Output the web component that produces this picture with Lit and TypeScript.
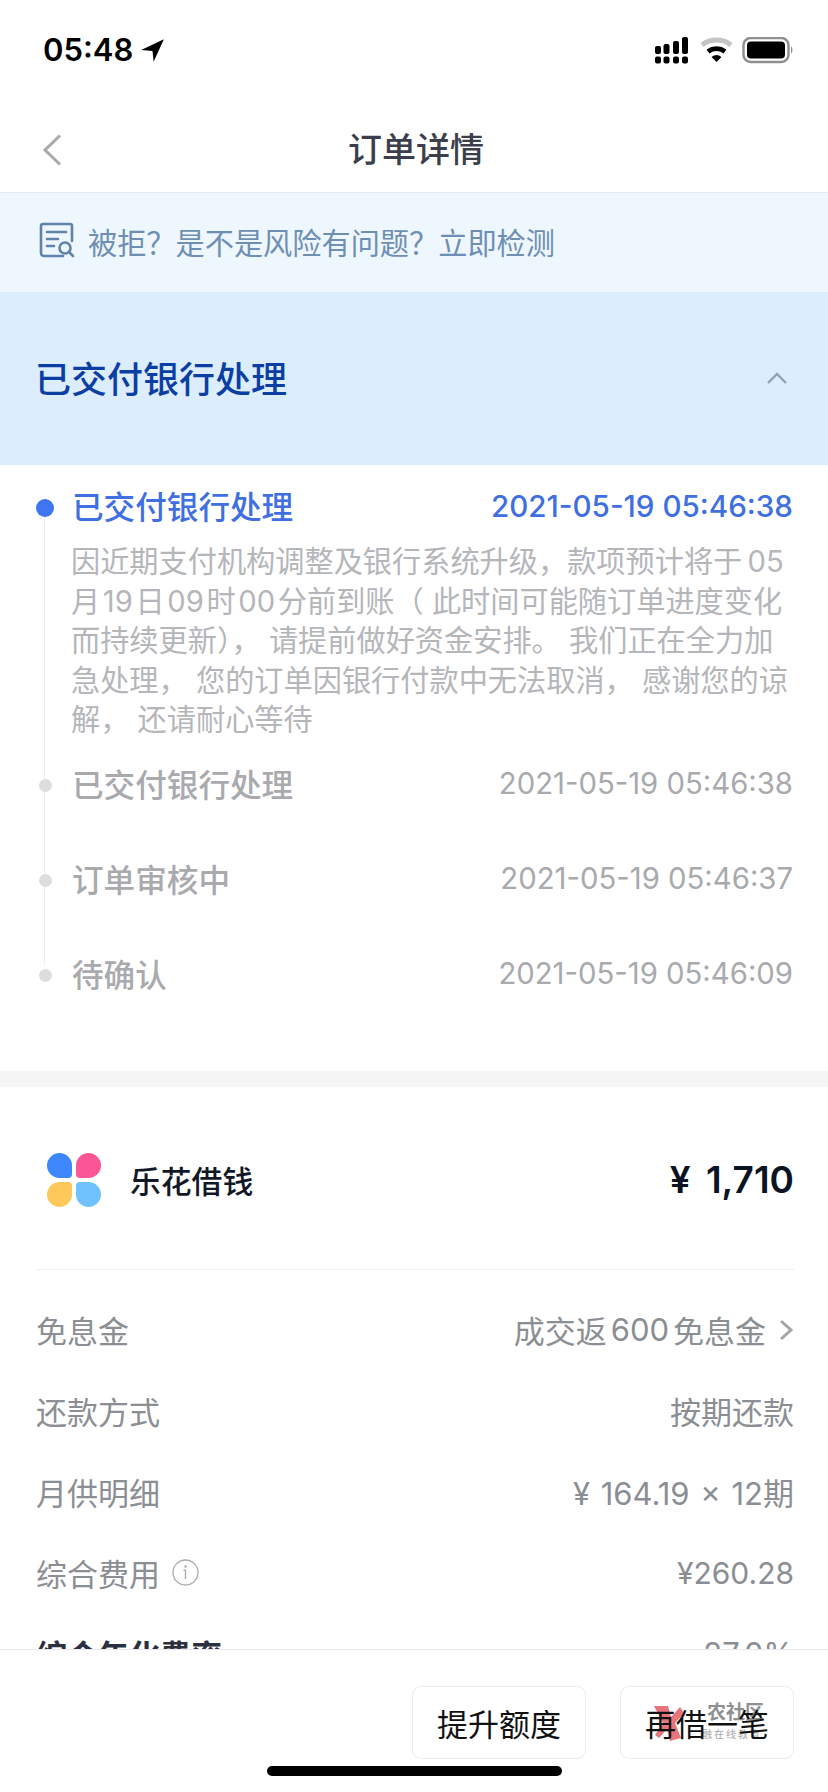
import { LitElement, html, css } from "lit";
import { customElement } from "lit/decorators.js";

const BODY = [
  "因近期支付机构调整及银行系统升级，款项预计将于\u200905",
  "月\u200a19\u200a日\u200a09\u200a时\u200a00\u200a分前到账（ 此时间可能随订单进度变化",
  "而持续更新）， 请提前做好资金安排。 我们正在全力加",
  "急处理， 您的订单因银行付款中无法取消， 感谢您的谅",
  "解， 还请耐心等待",
];
const HISTORY = [
  ["已交付银行处理", "2021-05-19 05:46:38"],
  ["订单审核中", "2021-05-19 05:46:37"],
  ["待确认", "2021-05-19 05:46:09"],
];

@customElement("app-root")
export class AppRoot extends LitElement {
  static styles = css`
    :host {
      display: block;
      position: relative;
      width: 828px;
      height: 1792px;
      overflow: hidden;
      background: #fff;
      font-family: Inter, "Noto Sans CJK SC", sans-serif;
    }
    .status {
      height: 100px;
      display: flex;
      justify-content: space-between;
      padding: 37px 33px 0 43px;
      box-sizing: border-box;
    }
    .time {
      display: flex;
      align-items: flex-start;
      gap: 7px;
      font-size: 31px;
      line-height: 26px;
      font-weight: 600;
      color: #000;
    }
    .time svg { margin-top: 1px; }
    .nav {
      height: 93px;
      box-sizing: border-box;
      border-bottom: 1px solid #e8e9ec;
      display: flex;
      align-items: center;
      justify-content: center;
      position: relative;
      font-size: 34px;
      font-weight: 500;
      color: #3a3f4b;
      padding: 3px 0 0 4px;
    }
    .back { position: absolute; left: 42px; top: 34px; }
    .banner {
      height: 99px;
      background: #eef6fe;
      display: flex;
      align-items: center;
      gap: 13px;
      padding-left: 39px;
      font-size: 29.2px;
      color: #6e8fb3;
      padding-bottom: 3px;
      box-sizing: border-box;
    }
    .banner svg { margin-bottom: 3px; }
    .hero {
      height: 173px;
      box-sizing: border-box;
      background: #dcedfd;
      display: flex;
      align-items: center;
      justify-content: space-between;
      padding: 0 40px 4px 35px;
      font-size: 36px;
      font-weight: 500;
      color: #0b3fa3;
    }
    .hero svg { margin-top: 2px; }
    .timeline {
      position: relative;
      height: 606px;
      padding: 20px 35px 0 36px;
      box-sizing: border-box;
    }
    .vline {
      position: absolute;
      left: 44px;
      top: 50px;
      width: 1px;
      height: 450px;
      background: #efefef;
    }
    .row {
      display: flex;
      align-items: center;
      height: 40px;
      position: relative;
      font-size: 31.6px;
    }
    .dot {
      width: 13px;
      height: 13px;
      margin: 0 21px 0 3px;
      border-radius: 50%;
      background: #dcdddf;
      flex: none;
    }
    .name { font-weight: 500; color: #a8aaae; flex: 1; margin-left: -1px; }
    .date { font-size: 29.3px; color: #a8aaae; }
    .current .dot { width: 18px; height: 18px; margin: 6px 19px 0 0; background: #3f75f0; }
    .current .name { color: #3f6fe0; }
    .current .date { color: #3f6fe0; font-weight: 500; font-size: 29.6px; margin-top: 1px; }
    .body {
      margin: 17px 0 0 35px;
      font-size: 29.2px;
      line-height: 39.5px;
      color: #b4b6ba;
      white-space: nowrap;
      height: 221px;
    }
    .history { height: 95px; align-items: flex-start; }
    .history .dot { margin-top: 16px; }
    .history .name { margin-top: -3px; }
    .history .date { margin-top: 3px; }
    .gap { height: 16px; background: #f5f5f5; }
    .product {
      height: 183px;
      margin: 0 34px 0 36px;
      border-bottom: 1px solid #eeeeef;
      display: flex;
      align-items: center;
      box-sizing: border-box;
      padding-top: 3px;
    }
    .logo {
      margin-left: 11px;
      display: grid;
      grid-template-columns: 25px 25px;
      grid-template-rows: 25px 25px;
      gap: 4px;
    }
    .logo i { display: block; border-radius: 50%; }
    .logo i:nth-child(1) { background: #3d86fb; border-bottom-right-radius: 4px; }
    .logo i:nth-child(2) { background: #fb5596; border-bottom-left-radius: 4px; }
    .logo i:nth-child(3) { background: #fec95a; border-top-right-radius: 4px; }
    .logo i:nth-child(4) { background: #6ec3ff; border-top-left-radius: 4px; }
    .pname { margin-left: 29px; font-size: 30.8px; font-weight: 500; color: #111827; flex: 1; }
    .amount { font-size: 37px; font-weight: 600; color: #0c1322; word-spacing: 6px; }
    .facts { padding: 0 34px 0 36px; }
    .fact {
      height: 81px;
      display: flex;
      align-items: center;
      justify-content: space-between;
      font-size: 31px;
      color: #8b8e93;
    }
    .fact:first-child { margin-top: 19px; }
    .fact span { display: flex; align-items: center; }
    .fact.strong { color: #2a3040; font-weight: 600; }
    .fact.strong .v { color: #8b8e93; font-weight: 400; }
    .fact .num { font-size: 30px; }
    .fact .wide { word-spacing: 2px; }
    .six { margin: 0 4px; font-weight: 400; }
    .info { margin-left: 12px; }
    .chev { margin-left: 12px; }
    .footer {
      position: absolute;
      left: 0;
      right: 0;
      bottom: 0;
      height: 143px;
      box-sizing: border-box;
      background: #fff;
      border-top: 1px solid #e8e9ec;
      display: flex;
      justify-content: flex-end;
      gap: 34px;
      padding: 36px 34px 0 0;
    }
    .btn {
      position: relative;
      width: 174px;
      height: 73px;
      box-sizing: border-box;
      border: 1px solid #ececee;
      border-radius: 9px;
      display: flex;
      align-items: center;
      justify-content: center;
      font-size: 31px;
      color: #111;
      padding-bottom: 1px;
    }
    .wm {
      position: absolute;
      left: 0;
      top: 0;
      width: 174px;
      height: 73px;
    }
    .wm-a {
      position: absolute;
      left: 86px;
      top: 16px;
      font-size: 19px;
      line-height: 20px;
      font-weight: 700;
      color: #8f9092;
      white-space: nowrap;
    }
    .wm-b {
      position: absolute;
      left: 81px;
      top: 41px;
      font-size: 10px;
      line-height: 12px;
      letter-spacing: 2px;
      color: #a5a6a8;
      white-space: nowrap;
    }
    .wm svg { position: absolute; left: 32px; top: 18px; }
    .label { position: relative; }
    .home {
      position: absolute;
      left: 267px;
      bottom: 16px;
      width: 295px;
      height: 10px;
      border-radius: 5px;
      background: #000;
    }
  `;

  render() {
    return html`
      <div class="status">
        <div class="time">05:48
          <svg width="25" height="25" viewBox="0 0 22 22"><path d="M21 1 L1 10.5 L11 11.5 L12 21 Z" fill="#000"/></svg>
        </div>
        <svg width="140" height="27" viewBox="0 0 140 27">
          <g fill="#000">
            <rect x="0" y="9" width="6" height="8" rx="2"/>
            <rect x="8.5" y="7" width="6" height="10" rx="2"/>
            <rect x="18" y="4" width="6" height="13" rx="2"/>
            <rect x="27" y="0" width="6" height="17" rx="2"/>
            <rect x="0" y="19.5" width="6" height="7" rx="2"/>
            <rect x="8.5" y="19.5" width="6" height="7" rx="2"/>
            <rect x="18" y="19.5" width="6" height="7" rx="2"/>
            <rect x="27" y="19.5" width="6" height="7" rx="2"/>
          </g>
          <path d="M47 8 A24 24 0 0 1 76 8" fill="none" stroke="#c4c4c4" stroke-width="5"/>
          <path d="M53 14.5 A15 15 0 0 1 70 14.5" fill="none" stroke="#000" stroke-width="5"/>
          <path d="M56.5 20 L61.5 25 L66.5 20 A8 8 0 0 0 56.5 20 Z" fill="#000"/>
          <rect x="88.5" y="1" width="45" height="24" rx="7" fill="none" stroke="#8f8f8f" stroke-width="2.4"/>
          <rect x="92" y="4.5" width="38" height="17" rx="4" fill="#000"/>
          <path d="M136 9 q3 4 0 8 Z" fill="#8f8f8f"/>
        </svg>
      </div>
      <div class="nav">
        <svg class="back" width="20" height="32" viewBox="0 0 20 32"><path d="M18 1.5 L3 16 L18 30.5" fill="none" stroke="#a9a9ab" stroke-width="3"/></svg>
        订单详情
      </div>
      <div class="banner">
        <svg width="36" height="36" viewBox="0 0 36 36" fill="none" stroke="#5f83ab" stroke-width="2.6" stroke-linecap="round" stroke-linejoin="round">
          <path d="M24 34 H5 a3 3 0 0 1 -3 -3 V4 a2 2 0 0 1 2 -2 H31 a2 2 0 0 1 2 2 V19"/>
          <path d="M8 10 H27 M8 17 H19 M8 24 H15"/>
          <circle cx="26" cy="26" r="5.5"/>
          <path d="M30 30 L34 34"/>
        </svg>
        被拒？是不是风险有问题？立即检测
      </div>
      <div class="hero">
        已交付银行处理
        <svg width="22" height="14" viewBox="0 0 22 14"><path d="M2 12 L11 3 L20 12" fill="none" stroke="#8fa3b8" stroke-width="2.4"/></svg>
      </div>
      <div class="timeline">
        <div class="vline"></div>
        <div class="row current">
          <div class="dot"></div>
          <div class="name">已交付银行处理</div>
          <div class="date">2021-05-19 05:46:38</div>
        </div>
        <div class="body">${BODY.map((l) => html`<div>${l}</div>`)}</div>
        ${HISTORY.map(
          ([n, d]) => html`
            <div class="row history">
              <div class="dot"></div>
              <div class="name">${n}</div>
              <div class="date">${d}</div>
            </div>
          `
        )}
      </div>
      <div class="gap"></div>
      <div class="product">
        <div class="logo"><i></i><i></i><i></i><i></i></div>
        <div class="pname">乐花借钱</div>
        <div class="amount">¥ 1,710</div>
      </div>
      <div class="facts">
        <div class="fact">
          <span>免息金</span>
          <span class="v">成交返<b class="six">600</b>免息金
            <svg class="chev" width="16" height="24" viewBox="0 0 16 24"><path d="M3 3 L13 12 L3 21" fill="none" stroke="#a3a5a9" stroke-width="3"/></svg>
          </span>
        </div>
        <div class="fact"><span>还款方式</span><span class="v">按期还款</span></div>
        <div class="fact"><span>月供明细</span><span class="v wide">¥ 164.19 × 12期</span></div>
        <div class="fact">
          <span>综合费用
            <svg class="info" width="27" height="27" viewBox="0 0 27 27" fill="none" stroke="#a9abaf" stroke-width="1.3"><circle cx="13.5" cy="13.5" r="12.5"/><path d="M13.5 11 V20 M11.5 11 H13.5"/><circle cx="13.5" cy="7.5" r="0.6"/></svg>
          </span>
          <span class="v num">¥260.28</span>
        </div>
        <div class="fact strong"><span>综合年化费率</span><span class="v">27.0%</span></div>
      </div>
      <div class="footer">
        <div class="btn">提升额度</div>
        <div class="btn">
          <div class="wm">
            <svg width="32" height="37" viewBox="0 0 32 37"><path d="M1 1 L15 1 L18 12 L27 2 L31 8 L22 18 L28 33 L17 36 L14 24 L6 33 L2 30 L10 18 Z" fill="#e8747c"/></svg>
            <div class="wm-a">农社区</div>
            <div class="wm-b">融在线教育</div>
          </div>
          <span class="label">再借一笔</span>
        </div>
      </div>
      <div class="home"></div>
    `;
  }
}
